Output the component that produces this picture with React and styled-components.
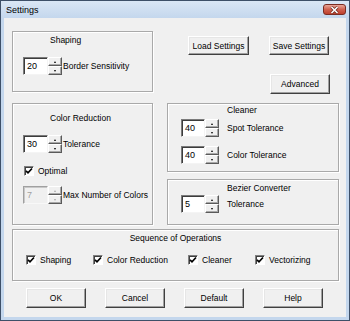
import React from 'react';
import styled, { createGlobalStyle } from 'styled-components';

const Global = createGlobalStyle`
  html, body { margin: 0; padding: 0; background: #ffffff; }
  body { font-family: "Liberation Sans", Arial, sans-serif; font-size: 8.5px; color: #000; }
`;

const Window = styled.div`
  width: 350px;
  height: 321px;
  box-sizing: border-box;
  border: 1px solid #3e5068;
  background: #c4d7ed;
  padding: 0 3px 3px;
  display: flex;
  flex-direction: column;
`;

const TitleBar = styled.div`
  height: 17px;
  flex: none;
  margin: 0 -3px;
  padding: 0 3px 0 5px;
  display: flex;
  align-items: center;
  justify-content: space-between;
  background: linear-gradient(#dae7f5, #c4d7ed);
`;

const TitleText = styled.span`
  font-size: 9px;
  color: #000;
`;

const CloseBtn = styled.div`
  width: 23px;
  height: 11px;
  box-sizing: border-box;
  border: 1px solid #7a2c22;
  border-radius: 3px;
  background: linear-gradient(#e9a799, #d0614f 50%, #bd3f2c);
  display: flex;
  align-items: center;
  justify-content: center;
`;

const Content = styled.div`
  flex: 1;
  background: #f0f0f0;
  padding: 13px 7px 0 8px;
  display: flex;
  flex-direction: column;
`;

const TopGrid = styled.div`
  display: grid;
  grid-template-columns: 141px 172px;
  grid-template-rows: 72px 122px;
  column-gap: 14px;
  align-items: start;
`;

const Group = styled.div`
  box-sizing: border-box;
  width: 100%;
  height: ${p => p.$h}px;
  border: 1px solid #a9a9a9;
  box-shadow: 1px 1px 0 #fff, inset 1px 1px 0 #fff;
  padding-top: ${p => p.$pt}px;
  display: flex;
  flex-direction: column;
`;

const RightStack = styled.div`
  display: flex;
  flex-direction: column;
  gap: 7px;
`;

const GroupTitle = styled.div`
  height: 11px;
  line-height: 11px;
  white-space: nowrap;
  padding-left: ${p => p.$left || 0}px;
  text-align: ${p => (p.$center ? 'center' : 'left')};
`;

const Row = styled.div`
  display: flex;
  align-items: center;
  margin-top: ${p => p.$mt}px;
  padding-left: ${p => p.$ml}px;
  gap: ${p => p.$gap ?? 1}px;
  white-space: nowrap;
`;

const SpinWrap = styled.div`
  display: flex;
  height: 18px;
`;

const Edit = styled.div`
  width: ${p => p.$w}px;
  height: 100%;
  box-sizing: border-box;
  background: ${p => (p.$disabled ? '#f0f0f0' : '#ffffff')};
  border: 1px solid;
  border-color: ${p => (p.$disabled ? '#a0a0a0 #f8f8f8 #f8f8f8 #a0a0a0' : '#7a7a7a #f4f4f4 #f4f4f4 #7a7a7a')};
  box-shadow: inset 1px 1px 0 ${p => (p.$disabled ? '#c8c8c8' : '#3c3c3c')};
  padding: 0 0 0 3px;
  display: flex;
  align-items: center;
  font-size: 9px;
  color: ${p => (p.$disabled ? '#a0a0a0' : '#000')};
`;

const SpinButtons = styled.div`
  width: 14px;
  height: 100%;
  display: flex;
  flex-direction: column;
`;

const SpinHalf = styled.div`
  flex: 1;
  box-sizing: border-box;
  background: #f0f0f0;
  border: 1px solid;
  border-color: #ffffff #5a5a5a #5a5a5a #ffffff;
  box-shadow: inset -1px -1px 0 #a8a8a8;
  display: flex;
  align-items: center;
  justify-content: center;
`;

const Arrow = styled.span`
  width: 0;
  height: 0;
  border-left: 1.5px solid transparent;
  border-right: 1.5px solid transparent;
  ${p => (p.$down ? 'border-top' : 'border-bottom')}: 2px solid ${p => (p.$disabled ? '#a8a8a8' : '#000')};
`;

const Label = styled.span`
  margin-left: ${p => p.$ml || 0}px;
  line-height: 11px;
`;

const CheckBox = styled.span`
  width: 10px;
  height: 10px;
  box-sizing: border-box;
  background: #fff;
  border: 1px solid;
  border-color: #808080 #ffffff #ffffff #808080;
  box-shadow: inset 1px 1px 0 #404040;
  display: inline-flex;
  align-items: center;
  justify-content: center;
  flex: none;
`;

const CheckItem = styled.div`
  display: flex;
  align-items: center;
  gap: 4px;
  white-space: nowrap;
`;

const SeqGrid = styled.div`
  display: grid;
  grid-template-columns: 67px 95px 67px auto;
  margin-top: 10px;
  padding-left: 13px;
  height: 11px;
  align-items: center;
`;

const ButtonGrid = styled.div`
  display: grid;
  grid-template-columns: 61px 60px;
  grid-template-rows: 19px 19px;
  column-gap: 20px;
  row-gap: 19px;
  padding: 5px 0 0 21px;
`;

const Button = styled.div`
  box-sizing: border-box;
  width: ${p => p.$w || 60}px;
  height: ${p => p.$h || 19}px;
  background: #f0f0f0;
  border: 1px solid;
  border-color: #ffffff #404040 #404040 #ffffff;
  box-shadow: inset -1px -1px 0 #a0a0a0, inset 1px 1px 0 #e6e6e6;
  display: flex;
  align-items: center;
  justify-content: center;
  white-space: nowrap;
  grid-column: ${p => p.$col || 'auto'};
  margin-left: ${p => p.$ml || 0}px;
`;

const BottomRow = styled.div`
  display: flex;
  gap: 19px;
  margin-top: 7px;
  padding-left: 14px;
`;

const SeqSection = styled.div`
  margin-top: 4px;
`;

function Spinner({ value, w = 25, disabled }) {
  return (
    <SpinWrap>
      <Edit $w={w} $disabled={disabled}>{value}</Edit>
      <SpinButtons>
        <SpinHalf><Arrow $disabled={disabled} /></SpinHalf>
        <SpinHalf><Arrow $down $disabled={disabled} /></SpinHalf>
      </SpinButtons>
    </SpinWrap>
  );
}

function Check({ label }) {
  return (
    <CheckItem>
      <CheckBox>
        <svg width="8" height="8" viewBox="0 0 8 8">
          <path d="M1 3.8 L3 5.8 L7 1.5" fill="none" stroke="#000" strokeWidth="1.7" />
        </svg>
      </CheckBox>
      <span>{label}</span>
    </CheckItem>
  );
}

export default function App() {
  return (
    <>
      <Global />
      <Window>
        <TitleBar>
          <TitleText>Settings</TitleText>
          <CloseBtn>
            <svg width="9" height="8" viewBox="0 0 9 8">
              <path d="M1.5 1 L7.5 7 M7.5 1 L1.5 7" stroke="#6a2a20" strokeWidth="3" />
              <path d="M1.5 1 L7.5 7 M7.5 1 L1.5 7" stroke="#ffffff" strokeWidth="1.6" />
            </svg>
          </CloseBtn>
        </TitleBar>
        <Content>
          <TopGrid>
            <Group $h={61} $pt={3}>
              <GroupTitle $left={37}>Shaping</GroupTitle>
              <Row $mt={11} $ml={10}>
                <Spinner value="20" />
                <Label>Border Sensitivity</Label>
              </Row>
            </Group>
            <ButtonGrid>
              <Button $w={61}>Load Settings</Button>
              <Button>Save Settings</Button>
              <Button $col={2} $ml={1} $h={20}>Advanced</Button>
            </ButtonGrid>
            <Group $h={122} $pt={9}>
              <GroupTitle $left={37}>Color Reduction</GroupTitle>
              <Row $mt={11} $ml={10}>
                <Spinner value="30" />
                <Label>Tolerance</Label>
              </Row>
              <Row $mt={13} $ml={11}>
                <Check label="Optimal" />
              </Row>
              <Row $mt={10} $ml={10}>
                <Spinner value="7" disabled />
                <Label>Max Number of Colors</Label>
              </Row>
            </Group>
            <RightStack>
              <Group $h={69} $pt={1}>
                <GroupTitle $left={59}>Cleaner</GroupTitle>
                <Row $mt={3} $ml={13}>
                  <Spinner value="40" w={24} />
                  <Label $ml={7}>Spot Tolerance</Label>
                </Row>
                <Row $mt={9} $ml={13}>
                  <Spinner value="40" w={24} />
                  <Label $ml={7}>Color Tolerance</Label>
                </Row>
              </Group>
              <Group $h={46} $pt={3}>
                <GroupTitle $left={59}>Bezier Converter</GroupTitle>
                <Row $mt={1} $ml={13}>
                  <Spinner value="5" w={24} />
                  <Label $ml={7}>Tolerance</Label>
                </Row>
              </Group>
            </RightStack>
          </TopGrid>
          <SeqSection>
            <Group $h={52} $pt={3}>
              <GroupTitle $center>Sequence of Operations</GroupTitle>
              <SeqGrid>
                <Check label="Shaping" />
                <Check label="Color Reduction" />
                <Check label="Cleaner" />
                <Check label="Vectorizing" />
              </SeqGrid>
            </Group>
          </SeqSection>
          <BottomRow>
            <Button $h={20}>OK</Button>
            <Button $h={20}>Cancel</Button>
            <Button $h={20}>Default</Button>
            <Button $h={20}>Help</Button>
          </BottomRow>
        </Content>
      </Window>
    </>
  );
}
